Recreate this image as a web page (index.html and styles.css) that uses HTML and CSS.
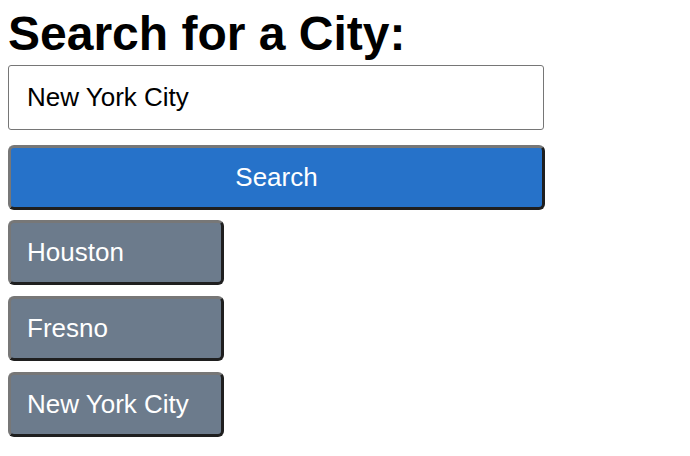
FILE: index.html
```html
<!DOCTYPE html>
<html>
<head>
<meta charset="utf-8">
<link rel="stylesheet" href="styles.css">
</head>
<body>
<main class="app">
  <h1 class="title">Search for a City:</h1>
  <input class="search-input" type="text" value="New York City">
  <button class="btn btn-search">Search</button>
  <div class="history">
    <button class="btn btn-city">Houston</button>
    <button class="btn btn-city">Fresno</button>
    <button class="btn btn-city">New York City</button>
  </div>
</main>
</body>
</html>
```
FILE: styles.css
```css
html, body {
  margin: 0;
  padding: 0;
  background: #fff;
}
body {
  padding: 8px;
  font-family: "Liberation Sans", Arial, sans-serif;
}
.app {
  display: flex;
  flex-direction: column;
  align-items: flex-start;
}
.title {
  margin: 0 0 5px 0;
  font-size: 48px;
  line-height: 52px;
  font-weight: bold;
  color: #000;
}
.search-input {
  box-sizing: border-box;
  width: 536px;
  height: 65px;
  margin: 0;
  padding: 0 18px;
  border: 1px solid #767676;
  border-radius: 3px;
  font-family: "Liberation Sans", Arial, sans-serif;
  font-size: 26px;
  color: #000;
  outline: none;
}
.btn {
  box-sizing: border-box;
  height: 65px;
  margin: 0;
  padding-bottom: 2px;
  border-width: 3px;
  border-style: solid;
  border-color: #777 #1f1f1f #1f1f1f #777;
  border-radius: 6px;
  color: #fff;
  font-family: "Liberation Sans", Arial, sans-serif;
  font-size: 26px;
}
.btn-search {
  width: 537px;
  margin-top: 15px;
  background: #2672c9;
  text-align: center;
}
.history {
  display: flex;
  flex-direction: column;
  gap: 11px;
  margin-top: 10px;
}
.btn-city {
  width: 216px;
  background: #6c7b8c;
  text-align: left;
  padding-left: 16px;
  padding-right: 16px;
}
```
